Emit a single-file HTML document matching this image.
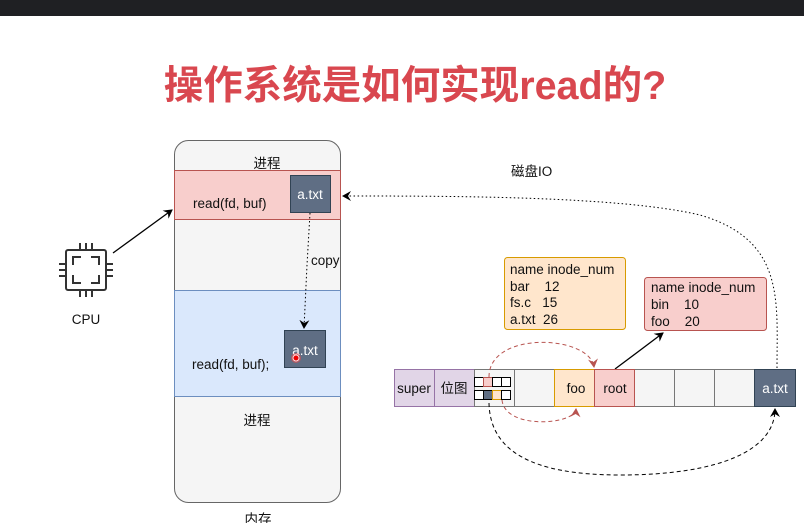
<!DOCTYPE html>
<html><head><meta charset="utf-8"><style>
html,body{margin:0;padding:0;background:#fff;width:804px;height:523px;overflow:hidden}
svg{display:block}
text{font-family:"Liberation Sans","Noto Sans CJK SC",sans-serif;font-size:13.5px;fill:#111}
</style></head><body>
<svg width="804" height="523" viewBox="0 0 804 523">
<defs>
<marker id="ab" markerWidth="10" markerHeight="10" refX="8" refY="5" orient="auto" markerUnits="userSpaceOnUse"><path d="M0,0 L9,5 L0,10 L3,5z" fill="#000"/></marker>
<marker id="ar" markerWidth="10" markerHeight="10" refX="8" refY="5" orient="auto" markerUnits="userSpaceOnUse"><path d="M0,0 L9,5 L0,10 L3,5z" fill="#b85450"/></marker>
</defs>
<rect x="0" y="0" width="804" height="16" fill="#1f2023"/>
<text x="415" y="99" text-anchor="middle" style="font-size:39.5px;font-weight:bold;fill:#d9474f;font-family:'Liberation Sans','Noto Sans CJK SC',sans-serif">操作系统是如何实现read的?</text>

<rect x="174.5" y="140.5" width="166" height="362" rx="14" fill="#f5f5f5" stroke="#666"/>
<text x="267" y="168" text-anchor="middle">进程</text>
<rect x="174.5" y="170.5" width="166" height="49" fill="#f8cecc" stroke="#b85450"/>
<text x="193" y="208">read(fd, buf)</text>
<rect x="290.5" y="175.5" width="40" height="37" fill="#5f6e84" stroke="#314354"/>
<text x="310" y="199" text-anchor="middle" style="fill:#fff">a.txt</text>
<rect x="174.5" y="290.5" width="166" height="106" fill="#dae8fc" stroke="#6c8ebf"/>
<rect x="284.5" y="330.5" width="41" height="37" fill="#5f6e84" stroke="#314354"/>
<text x="305" y="355" text-anchor="middle" style="fill:#fff">a.txt</text>
<circle cx="296" cy="358" r="5" fill="#f44" opacity="0.5"/><circle cx="296" cy="358" r="3" fill="#e00" stroke="#fdd" stroke-width="1"/>
<text x="192" y="369">read(fd, buf);</text>
<text x="257" y="425" text-anchor="middle">进程</text>
<text x="258" y="524" text-anchor="middle">内存</text>
<path d="M310,213 L307,265 L304,328" stroke="#000" stroke-dasharray="1.5,2.5" fill="none" marker-end="url(#ab)"/>
<text x="311" y="265">copy</text>

<g stroke="#333" stroke-width="2" fill="none">
<rect x="66" y="250" width="40" height="40" rx="2"/>
<path d="M73,265v-8h8 M91,257h8v8 M99,275v8h-8 M81,283h-8v-8"/>
<path d="M80,250v-7 M86,250v-7 M92,250v-7 M80,290v7 M86,290v7 M92,290v7 M66,264h-7 M66,270h-7 M66,276h-7 M106,264h7 M106,270h7 M106,276h7"/>
</g>
<text x="86" y="324" text-anchor="middle">CPU</text>
<line x1="113" y1="253" x2="172" y2="210" stroke="#000" stroke-width="1.3" marker-end="url(#ab)"/>

<text x="511" y="176">磁盘IO</text>
<path d="M777,368 C777,300 785,240 700,215 C620,196 450,196 343,196" stroke="#000" stroke-dasharray="1.5,2.5" fill="none" marker-end="url(#ab)"/>

<rect x="504.5" y="257.5" width="121" height="72" rx="3" fill="#ffe6cc" stroke="#d79b00"/>
<text x="510" y="274">name inode_num</text>
<text x="510" y="291">bar&#160;&#160;&#160; 12</text>
<text x="510" y="307">fs.c&#160;&#160; 15</text>
<text x="510" y="324">a.txt&#160; 26</text>
<rect x="644.5" y="277.5" width="122" height="53" rx="3" fill="#f8cecc" stroke="#b85450"/>
<text x="651" y="292">name inode_num</text>
<text x="651" y="309">bin&#160;&#160;&#160; 10</text>
<text x="651" y="326">foo&#160;&#160;&#160; 20</text>
<line x1="615" y1="369" x2="663" y2="333" stroke="#000" stroke-width="1.3" marker-end="url(#ab)"/>

<rect x="394.5" y="369.5" width="40" height="37" fill="#e1d5e7" stroke="#9673a6"/>
<text x="414" y="393" text-anchor="middle">super</text>
<rect x="434.5" y="369.5" width="40" height="37" fill="#e1d5e7" stroke="#9673a6"/>
<text x="454" y="393" text-anchor="middle">位图</text>
<g fill="#f5f5f5" stroke="#777">
<rect x="474.5" y="369.5" width="40" height="37"/>
<rect x="514.5" y="369.5" width="40" height="37"/>
<rect x="634.5" y="369.5" width="40" height="37"/>
<rect x="674.5" y="369.5" width="40" height="37"/>
<rect x="714.5" y="369.5" width="40" height="37"/>
</g>
<g stroke="#000" fill="#fff">
<rect x="474.5" y="377.5" width="9" height="9"/><rect x="483.5" y="377.5" width="9" height="9" fill="#f8cecc" stroke="#b85450"/><rect x="492.5" y="377.5" width="9" height="9"/><rect x="501.5" y="377.5" width="9" height="9"/>
<rect x="474.5" y="390.5" width="9" height="9"/><rect x="483.5" y="390.5" width="9" height="9" fill="#5f6e84"/><rect x="492.5" y="390.5" width="9" height="9" fill="#ffe6cc" stroke="#d79b00"/><rect x="501.5" y="390.5" width="9" height="9"/>
</g>
<rect x="554.5" y="369.5" width="40" height="37" fill="#ffe6cc" stroke="#d79b00"/>
<text x="576" y="393" text-anchor="middle">foo</text>
<rect x="594.5" y="369.5" width="40" height="37" fill="#f8cecc" stroke="#b85450"/>
<text x="615" y="393" text-anchor="middle">root</text>
<rect x="754.5" y="369.5" width="41" height="37" fill="#5f6e84" stroke="#314354"/>
<text x="775" y="393" text-anchor="middle" style="fill:#fff">a.txt</text>

<path d="M489,377 C489,330 590,335 594,367" stroke="#b85450" stroke-dasharray="4,3" fill="none" marker-end="url(#ar)"/>
<path d="M502,400 C505,430 575,425 576,409" stroke="#b85450" stroke-dasharray="4,3" fill="none" marker-end="url(#ar)"/>
<path d="M489,403 C490,450 530,475 620,475 C720,475 775,450 775,409" stroke="#000" stroke-dasharray="4,3" fill="none" marker-end="url(#ab)"/>
</svg>
</body></html>
